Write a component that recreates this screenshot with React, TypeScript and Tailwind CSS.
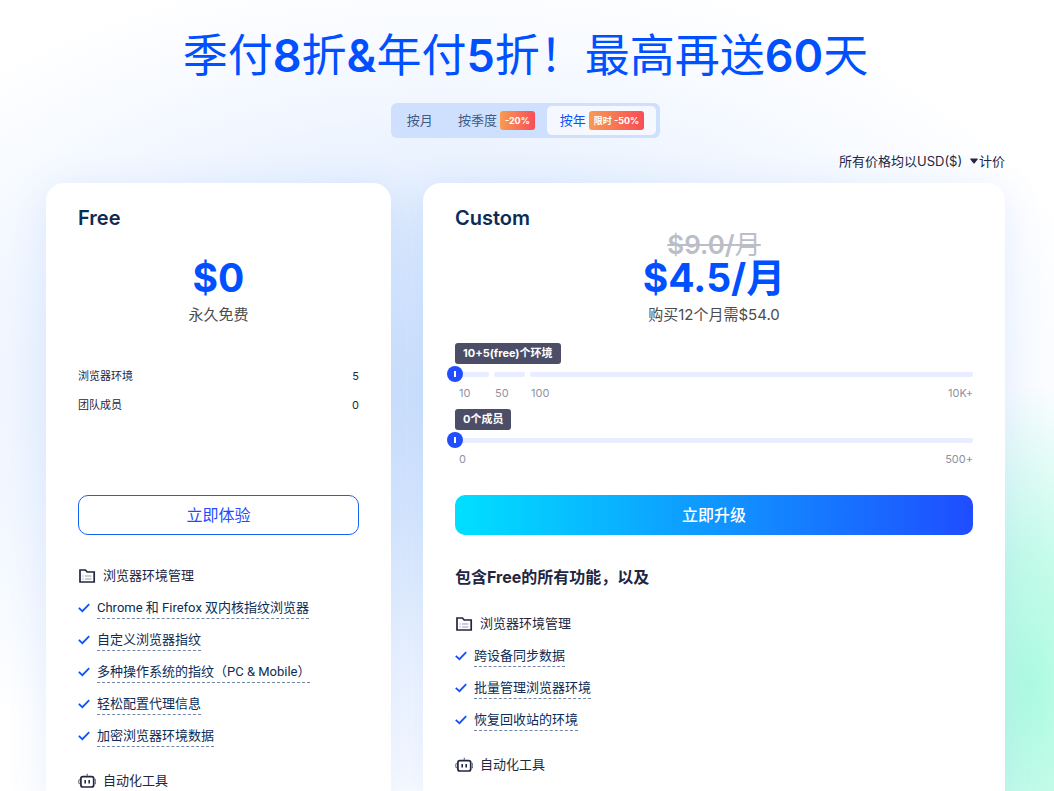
import { useState } from "react";
import clsx from "clsx";

const PERIODS = [
	{ id: "month", label: "按月", badge: "" },
	{ id: "quarter", label: "按季度", badge: "-20%" },
	{ id: "year", label: "按年", badge: "限时 -50%" },
];

const FREE_LIMITS = [
	{ label: "浏览器环境", value: 5 },
	{ label: "团队成员", value: 0 },
];

const FREE_FEATURES = [
	"Chrome 和 Firefox 双内核指纹浏览器",
	"自定义浏览器指纹",
	"多种操作系统的指纹（PC & Mobile）",
	"轻松配置代理信息",
	"加密浏览器环境数据",
];

const CUSTOM_FEATURES = ["跨设备同步数据", "批量管理浏览器环境", "恢复回收站的环境"];

const FolderIcon = () => (
	<svg width="18" height="16" viewBox="0 0 18 16" fill="none" aria-hidden>
		<path d="M2 2H7.4L9.2 4H16.2V14H2V2Z" stroke="#23263f" strokeWidth="1.7" />
		<path d="M4.5 8H5.7M7 8H13.5M4.5 11H5.7M7 11H13.5" stroke="#9a9cab" strokeWidth="1.2" />
	</svg>
);

const RobotIcon = () => (
	<svg width="18" height="16" viewBox="0 0 18 16" fill="none" aria-hidden>
		<rect x="2.9" y="3.6" width="12.8" height="10.4" rx="2" stroke="#23263f" strokeWidth="1.7" />
		<path d="M9.3 0.8V3" stroke="#6b6e80" strokeWidth="1.2" />
		<path d="M1.8 6.2C0.3 6.8 0.3 10.4 1.8 11M16.8 6.2C18.2 6.8 18.2 10.4 16.8 11" stroke="#6b6e80" strokeWidth="1.2" />
		<path d="M7.2 7V10.6M11.2 7V10.6" stroke="#23263f" strokeWidth="1.6" />
	</svg>
);

const CheckIcon = () => (
	<svg width="12" height="10" viewBox="0 0 12 10" fill="none" aria-hidden>
		<path d="M0.8 4.8L4.4 8.2L11.2 1.2" stroke="#0f52ff" strokeWidth="1.8" />
	</svg>
);

const GroupTitle = ({ icon, children }: { icon: React.ReactNode; children: React.ReactNode }) => (
	<h4 className="flex h-8 items-center gap-[7px] text-[13px] text-[#23263f]">
		{icon}
		{children}
	</h4>
);

const FeatureList = ({ items }: { items: string[] }) => (
	<ul className="mb-[13px] font-[Roboto,'Noto_Sans_CJK_SC',sans-serif]">
		{items.map((item) => (
			<li key={item} className="flex h-8 items-center gap-[7px] text-[13px] text-[#0b2c55]">
				<CheckIcon />
				<span className="border-b border-dashed border-[#7488a5] leading-5 whitespace-nowrap">
					{item}
				</span>
			</li>
		))}
	</ul>
);

type RangeFieldProps = {
	label: string;
	tip: string;
	segments: string[];
	marks: string[];
	end: string;
};

const RangeField = ({ label, tip, segments, marks, end }: RangeFieldProps) => {
	const [value, setValue] = useState(0);

	return (
		<div>
			<div className="flex">
				<span className="rounded-[3px] bg-[#4b4e66] px-2 text-[11px] leading-[21px] font-bold text-white">
					{tip}
				</span>
			</div>
			<div className="relative flex h-[21px] items-center gap-[5px]">
				{segments.map((width) => (
					<span key={width} className={clsx("h-[5px] rounded-xs bg-[#e8edff]", width)} />
				))}
				<input
					type="range"
					aria-label={label}
					min={0}
					max={100}
					value={value}
					onChange={(event) => setValue(Number(event.target.value))}
					className="absolute top-0 -left-2 h-5 w-[calc(100%+16px)] cursor-pointer appearance-none bg-transparent [&::-webkit-slider-thumb]:size-4 [&::-webkit-slider-thumb]:appearance-none [&::-webkit-slider-thumb]:rounded-full [&::-webkit-slider-thumb]:bg-[#1f4dff] [&::-webkit-slider-thumb]:bg-[linear-gradient(white,white)] [&::-webkit-slider-thumb]:bg-[length:2px_6px] [&::-webkit-slider-thumb]:bg-center [&::-webkit-slider-thumb]:bg-no-repeat"
				/>
			</div>
			<div className="flex pb-2 pl-1 text-[11px] leading-4 text-[#8f91a1]">
				{marks.map((mark) => (
					<span key={mark} className="w-9">
						{mark}
					</span>
				))}
				<span className="ml-auto">{end}</span>
			</div>
		</div>
	);
};

const Toolbar = () => {
	const [period, setPeriod] = useState("year");

	return (
		<div className="mt-[19px] flex justify-center">
			<div className="flex rounded-md bg-[#cfe0ff] py-[3px] pr-1 pl-[3px]">
				{PERIODS.map(({ id, label, badge }) => (
					<button
						key={id}
						type="button"
						aria-pressed={period === id}
						onClick={() => setPeriod(id)}
						className={clsx(
							"flex h-[29px] cursor-pointer items-center gap-[3px] rounded-[5px] pr-3 pl-[13px] text-[13px]",
							period === id ? "bg-[#f5f9ff] text-[#0f52ff]" : "text-[#3d5a85]"
						)}
					>
						{label}
						{badge && (
							<span className="rounded-[3px] bg-linear-to-r/srgb from-[#f79c52] to-[#f94c57] px-[5px] text-[9px] leading-[19px] font-bold text-white">
								{badge}
							</span>
						)}
					</button>
				))}
			</div>
		</div>
	);
};

const Currency = () => (
	<div className="mt-[13px] flex items-center justify-end text-[13px] leading-5 text-[#23263f]">
		<label htmlFor="currency">所有价格均以</label>
		<div className="relative flex items-center">
			<select id="currency" className="w-[62px] cursor-pointer appearance-none bg-transparent">
				<option>USD($)</option>
			</select>
			<svg className="pointer-events-none absolute right-px" width="8" height="6" viewBox="0 0 8 6" aria-hidden>
				<path d="M0.5 0.5H7.5L7.8 1.2L4.6 5.2Q4 5.8 3.4 5.2L0.2 1.2Z" fill="#23263f" />
			</svg>
		</div>
		<span>计价</span>
	</div>
);

// Latin runs and digits are set bolder than the Chinese characters around them
const MixedWeight = ({ text }: { text: string }) => (
	<>
		{text.split(/([\x21-\x7e]+)/).map((part, i) =>
			i % 2 ? (
				<span key={i} className="font-semibold">
					{part}
				</span>
			) : (
				part
			)
		)}
	</>
);

const FreeCard = () => (
	<section className="rounded-t-[18px] bg-white px-8 pt-[21px] shadow-[0_8px_40px_rgba(60,120,240,0.12)]">
		<h2 className="text-xl leading-7 font-semibold text-[#0b2c55]">Free</h2>
		<div className="pt-[26px] text-center">
			<p className="text-[39px] leading-10 font-bold text-[#0050ff]">$0</p>
			<p className="mt-1.5 text-[15px] leading-[22px] text-[#4c4c4c]">永久免费</p>
		</div>
		<dl className="mt-9 mb-[75px] text-[11px] leading-[29px] text-[#23263f]">
			{FREE_LIMITS.map(({ label, value }) => (
				<div key={label} className="flex justify-between">
					<dt>{label}</dt>
					<dd>{value}</dd>
				</div>
			))}
		</dl>
		<button
			type="button"
			className="mb-[25px] h-10 w-full cursor-pointer rounded-[10px] border border-[#1463f3] text-base text-[#1f4dff]"
		>
			立即体验
		</button>
		<GroupTitle icon={<FolderIcon />}>浏览器环境管理</GroupTitle>
		<FeatureList items={FREE_FEATURES} />
		<GroupTitle icon={<RobotIcon />}>自动化工具</GroupTitle>
	</section>
);

const CustomCard = () => (
	<section className="rounded-t-[18px] bg-white px-8 pt-[21px] shadow-[0_8px_40px_rgba(60,120,240,0.12)]">
		<h2 className="text-xl leading-7 font-semibold text-[#0b2c55]">Custom</h2>
		<div className="text-center">
			<p className="text-[26px] leading-[26px] text-[#bbbdc7] line-through">
				<MixedWeight text="$9.0/月" />
			</p>
			<p className="text-[39px] leading-10 font-bold text-[#0050ff]">$4.5/月</p>
			<p className="mt-1.5 text-[15px] leading-[22px] text-[#4c4c4c]">购买12个月需$54.0</p>
		</div>
		<div className="mt-[17px] mb-5">
			<RangeField
				label="环境数量"
				tip="10+5(free)个环境"
				segments={["w-[34px]", "w-[31px]", "flex-1"]}
				marks={["10", "50", "100"]}
				end="10K+"
			/>
			<RangeField label="成员数量" tip="0个成员" segments={["flex-1"]} marks={["0"]} end="500+" />
		</div>
		<button
			type="button"
			className="mb-[25px] h-10 w-full cursor-pointer rounded-[10px] bg-linear-to-r/srgb from-[#00e0ff] to-[#1f4dff] text-base font-medium text-white"
		>
			立即升级
		</button>
		<h3 className="mb-3.5 text-base leading-[34px] font-bold text-[#23263f]">
			包含Free的所有功能，以及
		</h3>
		<GroupTitle icon={<FolderIcon />}>浏览器环境管理</GroupTitle>
		<FeatureList items={CUSTOM_FEATURES} />
		<GroupTitle icon={<RobotIcon />}>自动化工具</GroupTitle>
	</section>
);

export default function App() {
	return (
		<div className="min-h-screen overflow-hidden bg-white bg-[radial-gradient(ellipse_130px_300px_at_98%_86%,rgba(160,250,220,0.85),rgba(160,250,220,0.6)_45%,transparent),radial-gradient(ellipse_680px_430px_at_42%_49%,rgba(160,198,250,0.5),rgba(160,198,250,0.38)_30%,rgba(190,215,255,0.22)_65%,transparent)] font-[Inter,'Noto_Sans_CJK_SC',sans-serif]">
			<main className="pt-7 pr-[49px] pl-[46px]">
				<h1 className="text-center text-[45px] leading-[56px] font-normal text-[#0050ff]">
					<MixedWeight text="季付8折&年付5折！最高再送60天" />
				</h1>
				<Toolbar />
				<Currency />
				<div className="mt-3 grid grid-cols-[345fr_582fr] gap-8">
					<FreeCard />
					<CustomCard />
				</div>
			</main>
		</div>
	);
}
